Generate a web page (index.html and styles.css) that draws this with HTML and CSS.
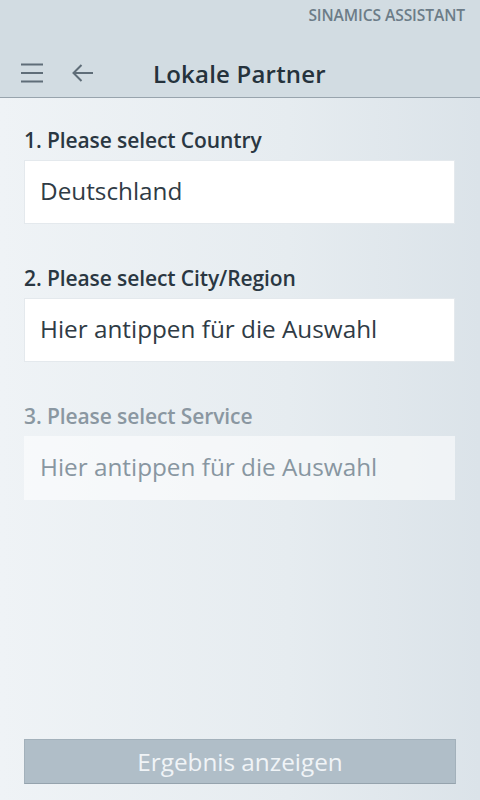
FILE: index.html
```html
<!DOCTYPE html>
<html lang="de">
<head>
    <meta charset="UTF-8">
    <meta name="viewport" content="width=device-width, initial-scale=1.0">
    <title>Lokale Partner</title>
    <link rel="stylesheet" href="styles.css">
</head>
<body>
    <div class="app">
        <header class="top">
            <div class="brand">SINAMICS ASSISTANT</div>
            <div class="bar">
                <svg class="ico" width="24" height="20" viewBox="0 0 24 20">
                    <path d="M1 1.5h22M1 10h22M1 18.5h22" stroke="#5f6d78" stroke-width="2.2" fill="none"/>
                </svg>
                <svg class="ico back" width="24" height="20" viewBox="0 0 24 20">
                    <path d="M22 10H2.5M10.5 2L2.5 10l8 8" stroke="#5f6d78" stroke-width="2" fill="none"/>
                </svg>
                <h1 class="title">Lokale Partner</h1>
            </div>
        </header>
        <main class="content">
            <div class="field">
                <p class="label">1. Please select Country</p>
                <div class="box">Deutschland</div>
            </div>
            <div class="field">
                <p class="label">2. Please select City/Region</p>
                <div class="box">Hier antippen für die Auswahl</div>
            </div>
            <div class="field off">
                <p class="label">3. Please select Service</p>
                <div class="box">Hier antippen für die Auswahl</div>
            </div>
        </main>
        <div class="foot">
            <button class="btn">Ergebnis anzeigen</button>
        </div>
    </div>
</body>
</html>
```
FILE: styles.css
```css
* {box-sizing: border-box;}
html, body {margin: 0; padding: 0;}
body {
    font-family: "Open Sans", "Noto Sans", sans-serif;
    color: #25323c;
    background: linear-gradient(90deg, #eff3f6 0%, #e6ecf0 60%, #dbe3e9 100%);
}
.app {display: flex; flex-direction: column; height: 800px;}
.top {background: #d2dce2; border-bottom: 1px solid #98a4ad; height: 98px;}
.brand {
    text-align: right; padding: 4px 15px 0 0; line-height: 22px;
    font-size: 15.6px; font-weight: 600; color: #6c7c88; letter-spacing: -0.1px;
}
.bar {display: flex; align-items: center; margin-top: 27px; padding-left: 20px; height: 40px;}
.ico {flex: none;}
.back {margin-left: 27px;}
.title {margin: 0 0 0 58px; font-size: 24px; font-weight: 600; color: #25323c; letter-spacing: 0.2px;}
.content {flex: 1; padding: 28px 25px 0 24px;}
.field {margin-bottom: 40px;}
.label {margin: 0 0 6px; font-size: 21px; font-weight: 600; color: #2a3742; line-height: 28px; letter-spacing: -0.1px;}
.box {
    background: #fff; height: 64px; padding: 0 15px 3px;
    display: flex; align-items: center;
    font-size: 24.3px; color: #2f3b45; border: 1px solid #e4e9ed;
}
.off .label {color: #8a97a1;}
.off .box {background: rgba(255, 255, 255, 0.55); color: #8896a1; border-color: transparent;}
.foot {padding: 0 24px 16px 24px;}
.btn {
    width: 100%; height: 45px; border: 1px solid #a3b1bb; border-bottom-color: #95a3ad;
    background: #b0bec8; color: #f0f4f7; font-family: inherit; font-size: 24.3px;
}
```
